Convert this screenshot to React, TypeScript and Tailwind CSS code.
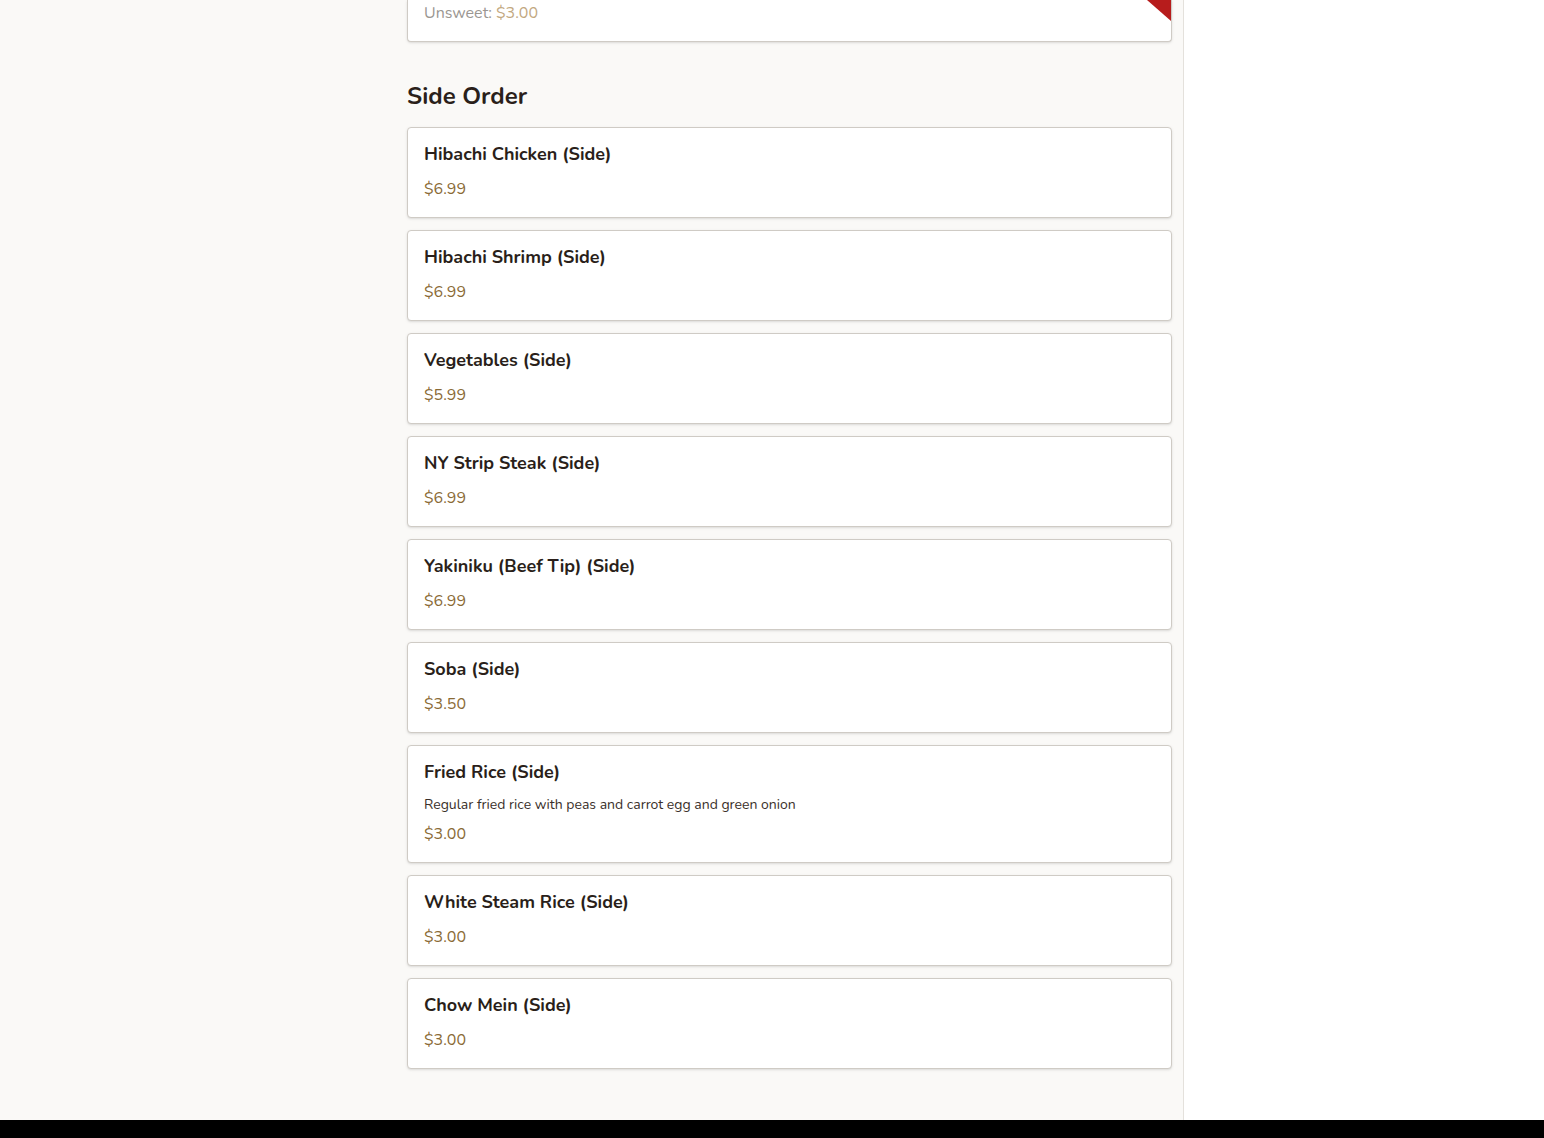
import React from 'react';

const items = [
  { name: 'Hibachi Chicken (Side)', price: '$6.99' },
  { name: 'Hibachi Shrimp (Side)', price: '$6.99' },
  { name: 'Vegetables (Side)', price: '$5.99' },
  { name: 'NY Strip Steak (Side)', price: '$6.99' },
  { name: 'Yakiniku (Beef Tip) (Side)', price: '$6.99' },
  { name: 'Soba (Side)', price: '$3.50' },
  {
    name: 'Fried Rice (Side)',
    desc: 'Regular fried rice with peas and carrot egg and green onion',
    price: '$3.00',
  },
  { name: 'White Steam Rice (Side)', price: '$3.00' },
  { name: 'Chow Mein (Side)', price: '$3.00' },
];

export default function App() {
  return (
    <div
      className="min-h-screen flex flex-col bg-white text-[#2a1f1a]"
      style={{ fontFamily: 'Nunito, Lato, "Noto Sans", sans-serif' }}
    >
      <div className="flex flex-1">
        <main className="w-[1184px] bg-[#faf9f7] border-r border-[#e4e1dc] pl-[407px] pr-[11px] pb-[51px]">
          <div className="relative bg-white border-x border-b border-[#cfcbc5] rounded-b-[4px] shadow-sm h-[42px] px-4 pt-[1px] overflow-hidden">
            <p className="text-[16px] leading-[24px] text-[#9a9691]">
              Unsweet: <span className="text-[#c2a87f]">$3.00</span>
            </p>
            <svg className="absolute right-0 top-0" width="24" height="21" viewBox="0 0 24 21">
              <polygon points="0,0 24,0 24,21" fill="#b71c1c" />
            </svg>
          </div>

          <h2 className="mt-[39px] mb-[16px] text-[24px] leading-[30px] font-bold text-[#2a1f1a]">
            Side Order
          </h2>

          <div className="flex flex-col gap-[12px]">
            {items.map((it) => (
              <div
                key={it.name}
                className="bg-white border border-[#cfcbc5] rounded-[4px] shadow-sm px-4 pt-[13px] pb-[16px]"
              >
                <h3 className="text-[18px] leading-[26px] font-bold text-[#2a1f1a]">{it.name}</h3>
                {it.desc && (
                  <p className="mt-[10px] text-[14px] leading-[20px] text-[#3a302a]">{it.desc}</p>
                )}
                <p className={`${it.desc ? 'mt-[7px]' : 'mt-[10px]'} text-[16px] leading-[24px] text-[#8a6a35]`}>
                  {it.price}
                </p>
              </div>
            ))}
          </div>
        </main>
        <aside className="flex-1 bg-white" />
      </div>
      <footer className="h-[18px] bg-black" />
    </div>
  );
}
